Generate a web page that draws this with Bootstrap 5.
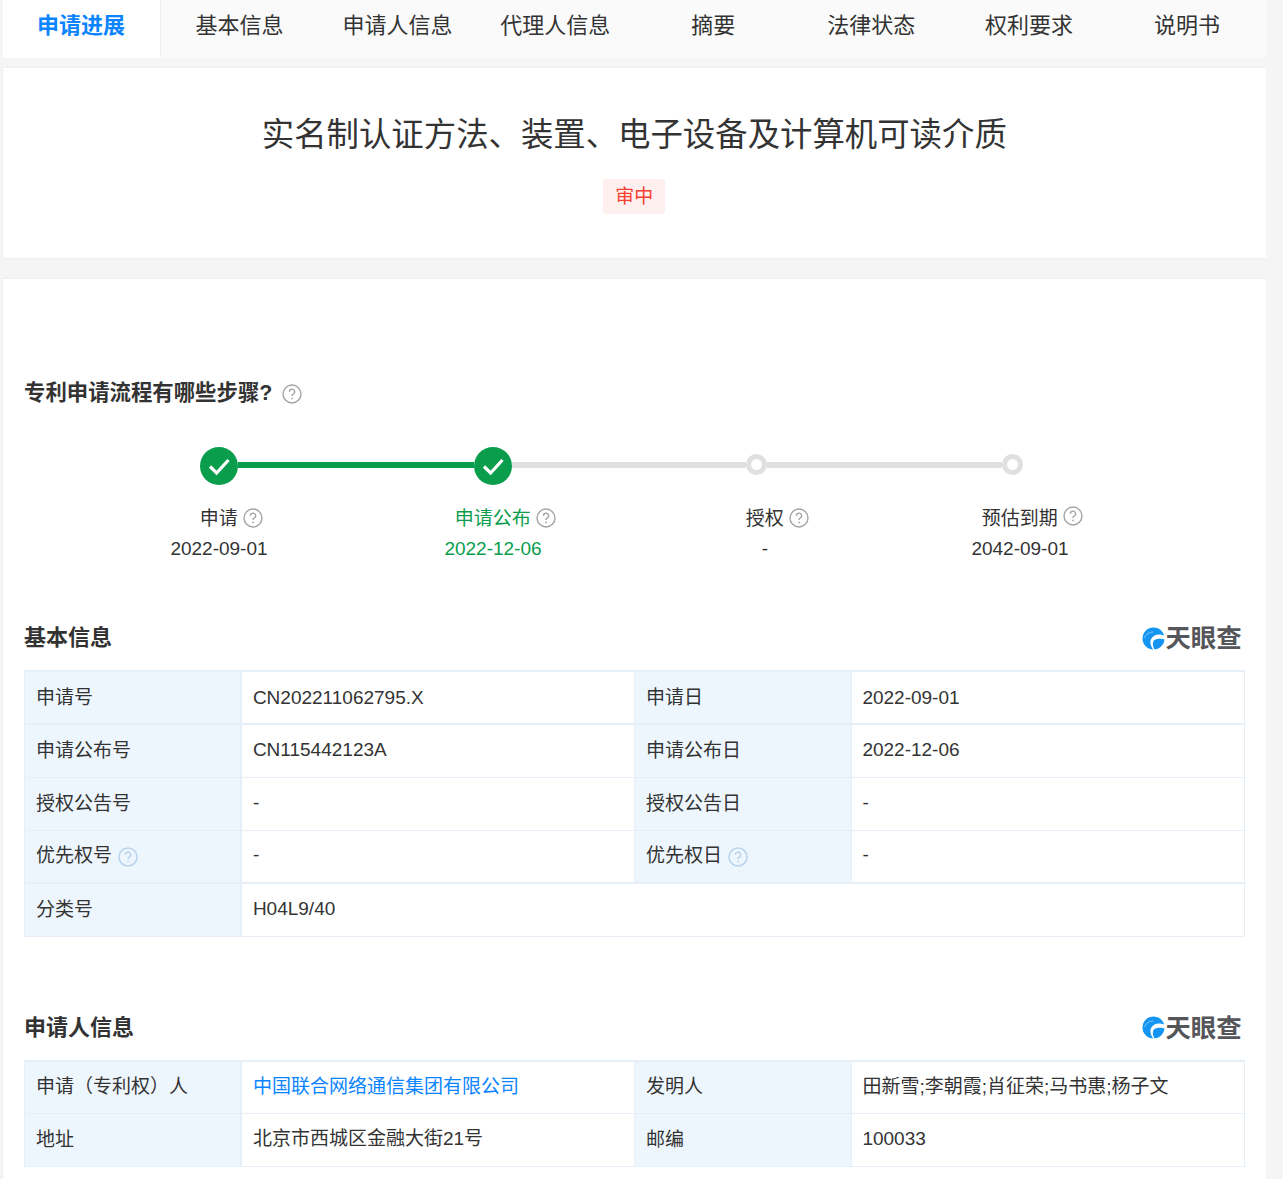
<!DOCTYPE html>
<html lang="zh-CN">
<head>
<meta charset="utf-8">
<title>专利详情</title>
<link href="https://cdn.jsdelivr.net/npm/bootstrap@5.3.0/dist/css/bootstrap.min.css" rel="stylesheet">
<style>
html,body{height:1179px;overflow:hidden}
body{background:#f5f5f5;color:#333;font-family:"Liberation Sans","Noto Sans CJK SC",sans-serif;font-size:19px;padding-left:2.6px;width:1266px}
.tabbar{height:58px;background:#fafafa}
.tabitem{width:158px;height:58px;line-height:52px;text-align:center;font-size:22px;color:#333}
.tabitem.on{background:#fff;color:#0a84ff;font-weight:700;border-right:1px solid #f0f0f0}
.panel{background:#fff;box-shadow:0 0 2px rgba(0,0,0,.08)}
.hero{margin-top:10px;height:190px;padding-top:43px}
.hero-title{font-size:32.4px;line-height:48px;font-weight:400;margin:0;color:#333}
.status{margin-top:20px;display:inline-block;height:35px;width:62px;line-height:35px;background:#fff0f0;color:#f5412f;font-size:19px;border-radius:3px}
.detail{margin-top:21px;height:900px;padding:0 21.4px}
.flow-title{padding-top:98px;font-size:21.4px;line-height:32px;font-weight:700;color:#333}
.flow-title .qm{margin-left:4px}
.qm{display:inline-block;vertical-align:middle}
.qm-gray circle:first-child{fill:none;stroke:#a5a5a5;stroke-width:1.4}
.qm-gray path{fill:none;stroke:#a5a5a5;stroke-width:1.4}
.qm-gray circle:last-child{fill:#a5a5a5}
.qm-blue{margin-left:1px}
.qm-blue circle:first-child{fill:none;stroke:#b8d4ec;stroke-width:1.5}
.qm-blue path{fill:none;stroke:#b8d4ec;stroke-width:1.5}
.qm-blue circle:last-child{fill:#b8d4ec}
.track{margin-top:38px;height:38px;padding-left:176.4px}
.track-line{height:6px;background:#e0e0e0;margin-bottom:2px}
.track-line.done{background:#0a9e4c}
.dot-done{width:38px;height:38px;flex:none}
.dot-todo{width:21px;height:21px;flex:none;border:5px solid #e0e0e0;border-radius:50%;background:#fff;margin-bottom:3px}
.steps{margin-top:19px;line-height:30px}
.stepcol{text-align:center;flex:none}
.stepcol .qm{margin-right:-25px;margin-top:-3px}
.stepcol .qm.raised{margin-top:-8px}
.stepcol.green{color:#0a9e4c}
.sec-head{font-size:22px;line-height:32px;font-weight:700;color:#333}
.tyc{font-size:25.4px;line-height:32px;font-weight:700;color:#55565a;padding-right:3px}
.sheet{width:1220px;margin:0;border-collapse:collapse;table-layout:fixed;color:#333}
.sheet td{height:53px;padding:0 10.4px;border:1px solid #e6eff7;vertical-align:middle;line-height:26px;background:#fff}
.sheet td.lab{background:#eef6fd;padding:0 11px}
.sheet td:first-child{border-right-width:2px}
.sheet tr:first-child td{border-top-width:2px}
.sheet tr+tr td{padding-bottom:2px}
.sheet tr.heavy td{border-bottom-width:2px}
.sheet a{color:#0a84ff;text-decoration:none}
.first-sec{margin-top:58px}
.second-sec{margin-top:75px}
.sheet-wrap{margin-top:16px}
</style>
</head>
<body>
<div class="tabbar d-flex">
  <div class="tabitem on">申请进展</div>
  <div class="tabitem">基本信息</div>
  <div class="tabitem">申请人信息</div>
  <div class="tabitem">代理人信息</div>
  <div class="tabitem">摘要</div>
  <div class="tabitem">法律状态</div>
  <div class="tabitem">权利要求</div>
  <div class="tabitem">说明书</div>
</div>

<div class="panel hero text-center">
  <h1 class="hero-title">实名制认证方法、装置、电子设备及计算机可读介质</h1>
  <span class="status">审中</span>
</div>

<div class="panel detail">
  <div class="flow-title">专利申请流程有哪些步骤? <svg class="qm qm-gray" width="20" height="20" viewBox="0 0 20 20"><circle cx="10" cy="10" r="9"/><path d="M7.4 7.8a2.6 2.6 0 1 1 3.9 2.2c-.9.5-1.3 1-1.3 2"/><circle cx="10" cy="14.4" r=".9"/></svg></div>

  <div class="track d-flex align-items-center">
    <svg class="dot-done" viewBox="0 0 38 38"><circle cx="19" cy="19" r="19" fill="#0a9e4c"/><path d="M10 19.5l6.6 6.5L28.5 13" fill="none" stroke="#fff" stroke-width="3.2"/></svg>
    <div class="track-line done" style="width:236px"></div>
    <svg class="dot-done" viewBox="0 0 38 38"><circle cx="19" cy="19" r="19" fill="#0a9e4c"/><path d="M10 19.5l6.6 6.5L28.5 13" fill="none" stroke="#fff" stroke-width="3.2"/></svg>
    <div class="track-line" style="width:234px"></div>
    <div class="dot-todo"></div>
    <div class="track-line" style="width:235px"></div>
    <div class="dot-todo"></div>
  </div>

  <div class="steps d-flex">
    <div class="stepcol" style="width:274px;margin-left:58px">
      <div>申请 <svg class="qm qm-gray" width="20" height="20" viewBox="0 0 20 20"><circle cx="10" cy="10" r="9"/><path d="M7.4 7.8a2.6 2.6 0 1 1 3.9 2.2c-.9.5-1.3 1-1.3 2"/><circle cx="10" cy="14.4" r=".9"/></svg></div>
      <div>2022-09-01</div>
    </div>
    <div class="stepcol green" style="width:274px">
      <div>申请公布 <svg class="qm qm-gray" width="20" height="20" viewBox="0 0 20 20"><circle cx="10" cy="10" r="9"/><path d="M7.4 7.8a2.6 2.6 0 1 1 3.9 2.2c-.9.5-1.3 1-1.3 2"/><circle cx="10" cy="14.4" r=".9"/></svg></div>
      <div>2022-12-06</div>
    </div>
    <div class="stepcol" style="width:270px">
      <div>授权 <svg class="qm qm-gray" width="20" height="20" viewBox="0 0 20 20"><circle cx="10" cy="10" r="9"/><path d="M7.4 7.8a2.6 2.6 0 1 1 3.9 2.2c-.9.5-1.3 1-1.3 2"/><circle cx="10" cy="14.4" r=".9"/></svg></div>
      <div>-</div>
    </div>
    <div class="stepcol" style="width:240px">
      <div>预估到期 <svg class="qm qm-gray raised" width="20" height="20" viewBox="0 0 20 20"><circle cx="10" cy="10" r="9"/><path d="M7.4 7.8a2.6 2.6 0 1 1 3.9 2.2c-.9.5-1.3 1-1.3 2"/><circle cx="10" cy="14.4" r=".9"/></svg></div>
      <div>2042-09-01</div>
    </div>
  </div>

  <div class="first-sec d-flex justify-content-between align-items-center sec-head">
    <span>基本信息</span>
    <span class="d-flex align-items-center tyc"><svg width="23" height="23" viewBox="0 0 23 23"><circle cx="11.500" cy="11.500" r="11" fill="#1495f2"/><path d="M23 9C17.500 6 11 7.500 8.800 12.500c-1.200 3.500.4 7.500 2.700 10.500h1.300c-2-3.300-2.800-6.600-1-9.500C14 11.500 18.500 11 23 12.500z" fill="#fff"/><path d="M2.500 11c1.500-4 5-6 9-6" fill="none" stroke="#9fd3fa" stroke-width=".8"/></svg>天眼查</span>
  </div>

  <div class="sheet-wrap">
    <table class="sheet">
      <colgroup><col style="width:217px"><col style="width:393px"><col style="width:217px"><col style="width:393px"></colgroup>
      <tr class="heavy"><td class="lab">申请号</td><td>CN202211062795.X</td><td class="lab">申请日</td><td>2022-09-01</td></tr>
      <tr><td class="lab">申请公布号</td><td>CN115442123A</td><td class="lab">申请公布日</td><td>2022-12-06</td></tr>
      <tr><td class="lab">授权公告号</td><td>-</td><td class="lab">授权公告日</td><td>-</td></tr>
      <tr class="heavy"><td class="lab">优先权号 <svg class="qm qm-blue" width="20" height="20" viewBox="0 0 20 20"><circle cx="10" cy="10" r="9"/><path d="M7.4 7.8a2.6 2.6 0 1 1 3.9 2.2c-.9.5-1.3 1-1.3 2"/><circle cx="10" cy="14.4" r=".9"/></svg></td><td>-</td><td class="lab">优先权日 <svg class="qm qm-blue" width="20" height="20" viewBox="0 0 20 20"><circle cx="10" cy="10" r="9"/><path d="M7.4 7.8a2.6 2.6 0 1 1 3.9 2.2c-.9.5-1.3 1-1.3 2"/><circle cx="10" cy="14.4" r=".9"/></svg></td><td>-</td></tr>
      <tr><td class="lab">分类号</td><td colspan="3">H04L9/40</td></tr>
    </table>
  </div>

  <div class="second-sec d-flex justify-content-between align-items-center sec-head">
    <span>申请人信息</span>
    <span class="d-flex align-items-center tyc"><svg width="23" height="23" viewBox="0 0 23 23"><circle cx="11.500" cy="11.500" r="11" fill="#1495f2"/><path d="M23 9C17.500 6 11 7.500 8.800 12.500c-1.200 3.500.4 7.500 2.700 10.500h1.300c-2-3.300-2.800-6.600-1-9.500C14 11.500 18.500 11 23 12.500z" fill="#fff"/><path d="M2.500 11c1.500-4 5-6 9-6" fill="none" stroke="#9fd3fa" stroke-width=".8"/></svg>天眼查</span>
  </div>

  <div class="sheet-wrap">
    <table class="sheet">
      <colgroup><col style="width:217px"><col style="width:393px"><col style="width:217px"><col style="width:393px"></colgroup>
      <tr><td class="lab">申请（专利权）人</td><td><a href="#">中国联合网络通信集团有限公司</a></td><td class="lab">发明人</td><td>田新雪;李朝霞;肖征荣;马书惠;杨子文</td></tr>
      <tr><td class="lab">地址</td><td>北京市西城区金融大街21号</td><td class="lab">邮编</td><td>100033</td></tr>
    </table>
  </div>
</div>
</body>
</html>
